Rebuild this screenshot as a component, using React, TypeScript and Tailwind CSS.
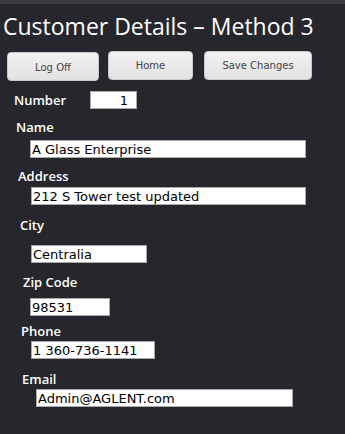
import React from "react";

const fieldBox =
  "block h-[18px] border border-[#a9a9a9] bg-white px-[1px] text-[13px] leading-[16px] text-black font-['DejaVu_Sans',sans-serif] outline-none";
const labelCls =
  "text-[13px] font-semibold text-white font-['Open_Sans',sans-serif] leading-[18px]";
const btnCls =
  "h-[29px] rounded-[4px] border border-[#c8c8c8] bg-gradient-to-b from-[#f2f2f2] to-[#e2e2e2] text-[10px] text-[#444] font-['DejaVu_Sans',sans-serif]";

function Field(props: {
  label: string;
  value: string;
  labelPad: string;
  gap: string;
  inputPad: string;
  width: string;
}) {
  return (
    <div className="flex flex-col">
      <div className={`${labelCls} ${props.labelPad}`}>{props.label}</div>
      <div className={`${props.gap} ${props.inputPad}`}>
        <input readOnly defaultValue={props.value} className={`${fieldBox} ${props.width}`} />
      </div>
    </div>
  );
}

export default function App() {
  return (
    <div className="min-h-[434px] w-[345px] bg-[#26272c] overflow-hidden">
      <div className="h-[4px] bg-[#3b3c40]" />
      <h1 className="mt-[9px] pl-[3px] text-[23px] leading-[26px] text-white font-['Open_Sans',sans-serif] whitespace-nowrap">
        Customer Details – Method 3
      </h1>

      <div className="mt-[12px] flex items-start">
        <button className={`${btnCls} ml-[7px] mt-[1px] w-[92px] pt-[2px]`}>Log Off</button>
        <button className={`${btnCls} ml-[9px] w-[85px]`}>Home</button>
        <button className={`${btnCls} ml-[11px] w-[108px]`}>Save Changes</button>
      </div>

      <div className="mt-[10px] flex items-center">
        <div className={`${labelCls} ml-[14px] w-[76px]`}>Number</div>
        <input
          readOnly
          defaultValue="1"
          className={`${fieldBox} w-[47px] text-right pr-[8px]`}
        />
      </div>

      <div className="mt-[9px] flex flex-col">
        <Field label="Name" value="A Glass Enterprise" labelPad="pl-[16px]" gap="mt-[4px]" inputPad="pl-[30px]" width="w-[276px]" />
        <div className="mt-[9px]" />
        <Field label="Address" value="212 S Tower test updated" labelPad="pl-[18px]" gap="mt-[2px]" inputPad="pl-[31px]" width="w-[275px]" />
        <div className="mt-[11px]" />
        <Field label="City" value="Centralia" labelPad="pl-[20px]" gap="mt-[11px]" inputPad="pl-[31px]" width="w-[116px]" />
        <div className="mt-[10px]" />
        <Field label="Zip Code" value="98531" labelPad="pl-[23px]" gap="mt-[7px]" inputPad="pl-[30px]" width="w-[80px]" />
        <div className="mt-[6px]" />
        <Field label="Phone" value="1 360-736-1141" labelPad="pl-[21px]" gap="mt-[1px]" inputPad="pl-[31px]" width="w-[124px]" />
        <div className="mt-[11px]" />
        <Field label="Email" value="Admin@AGLENT.com" labelPad="pl-[22px]" gap="mt-[1px]" inputPad="pl-[36px]" width="w-[257px]" />
      </div>
    </div>
  );
}
